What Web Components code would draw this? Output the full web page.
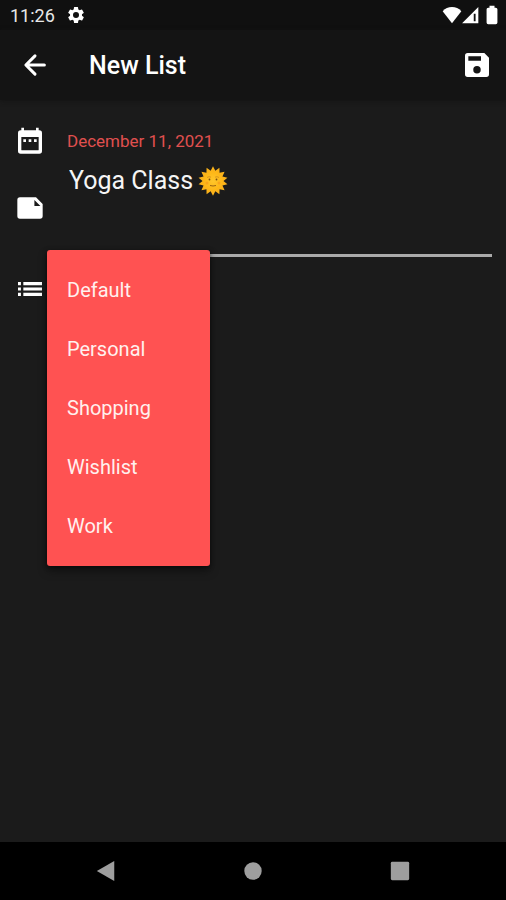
<!DOCTYPE html>
<html lang="en">
<head>
<meta charset="utf-8">
<meta name="viewport" content="width=device-width, initial-scale=1">
<title>New List</title>
<style>
body { margin: 0; background: #1b1b1b; color: #fff; font-family: Roboto, "Liberation Sans", sans-serif; }
</style>
</head>
<body>
<list-screen></list-screen>
<script>
const define = (name, css, html, setup) => {
  const template = document.createElement('template');
  template.innerHTML = `<style>
    * { box-sizing: border-box; }
    button { font: inherit; color: inherit; background: none; border: 0; padding: 0; margin: 0; cursor: pointer; }
    ${css}</style>${html}`;
  customElements.define(name, class extends HTMLElement {
    constructor() {
      super();
      this.attachShadow({ mode: 'open' }).append(template.content.cloneNode(true));
    }
    connectedCallback() { if (setup) setup(this); }
  });
};

const icons = {
  back: '<path d="M19.5 12H5M12 4.7L4.7 12l7.3 7.3" fill="none" stroke="currentColor" stroke-width="2.4" stroke-linecap="round" stroke-linejoin="round"/>',
  save: '<path fill-rule="evenodd" d="M5 3h12.5L21 6.5V19a2 2 0 0 1-2 2H5a2 2 0 0 1-2-2V5a2 2 0 0 1 2-2zm.5 2.5v3.3H15V5.500zM12 12.700a2.800 2.800 0 1 0 0 5.600 2.800 2.800 0 0 0 0-5.600z"/>',
  calendar: '<path fill-rule="evenodd" d="M5.500 2h2v2h9V2h2v2h.5a2 2 0 0 1 2 2v13.500a2 2 0 0 1-2 2H5a2 2 0 0 1-2-2V6a2 2 0 0 1 2-2h.5zM5.500 9v9.500a.5.5 0 0 0 .5.5h12a.5.5 0 0 0 .5-.5V9z"/><path d="M7 10.700h2v2H7zM11 10.700h2v2h-2zM15 10.700h2v2h-2z"/>',
  note: '<path fill-rule="evenodd" d="M4.500 4h12L21.500 9v9a2 2 0 0 1-2 2h-15a2 2 0 0 1-2-2V6a2 2 0 0 1 2-2zM15.300 6v4.500h4.500z"/>',
  list: '<path d="M3 6.800h2.200v2.400H3zM3 10.800h2.200v2.400H3zM3 14.800h2.200v2.400H3zM7 6.800h14v2.400H7zM7 10.800h14v2.400H7zM7 14.800h14v2.400H7z"/>',
  gear: '<path d="M19.140 12.940c.04-.3.06-.61.06-.94 0-.32-.02-.64-.07-.94l2.030-1.580a.49.49 0 0 0 .12-.61l-1.920-3.320a.49.49 0 0 0-.59-.22l-2.390.96a7 7 0 0 0-1.620-.94l-.36-2.540a.48.48 0 0 0-.48-.41h-3.840a.48.48 0 0 0-.47.41l-.36 2.540c-.59.24-1.130.57-1.620.94l-2.390-.96a.48.48 0 0 0-.59.22L2.740 8.870a.48.48 0 0 0 .12.61l2.030 1.580a7 7 0 0 0 0 1.880l-2.030 1.580a.49.49 0 0 0-.12.61l1.920 3.320c.12.22.37.29.59.22l2.390-.96c.5.38 1.030.7 1.620.94l.36 2.540c.05.24.24.41.48.41h3.840c.24 0 .44-.17.47-.41l.36-2.540a7 7 0 0 0 1.620-.94l2.390.96c.22.08.47 0 .59-.22l1.920-3.320a.49.49 0 0 0-.12-.61zM12 15.600a3.600 3.600 0 1 1 0-7.200 3.600 3.600 0 0 1 0 7.200z"/>',
  wifi: '<path d="M12 22L.8 7.500C3.800 4 7.600 2.500 12 2.500s8.200 1.500 11.200 5z"/>',
  signal: '<path fill-rule="evenodd" d="M2.500 22L22 2.500V22zM16.500 10.500V19.500h2.200V10.500z"/>',
  battery: '<path d="M9 1h6v2.200h1.500a2 2 0 0 1 2 2V21a2 2 0 0 1-2 2h-9a2 2 0 0 1-2-2V5.200a2 2 0 0 1 2-2H9z"/>',
  triangle: '<path d="M2 12L21 1v22z"/>',
  circle: '<circle cx="12" cy="12" r="9.500"/>',
  square: '<rect x="2" y="2" width="20" height="20" rx="1.500"/>'
};

define('md-icon',
  ':host { display: block; flex: none; width: var(--size, 32px); height: var(--size, 32px); } svg { display: block; width: 100%; height: 100%; }',
  '<svg viewBox="0 0 24 24" fill="currentColor" aria-hidden="true"></svg>',
  el => { el.shadowRoot.querySelector('svg').innerHTML = icons[el.getAttribute('name')]; });

define('sun-face',
  ':host { display: block; flex: none; width: 30px; height: 30px; } svg { display: block; width: 100%; height: 100%; }',
  `<svg viewBox="-15 -15 30 30" role="img" aria-label="Sun with face">
    <defs><radialGradient id="glow"><stop offset="0" stop-color="#ffc62a"/><stop offset="1" stop-color="#fdb515"/></radialGradient></defs>
    <path id="rays" fill="#fbb31a"/>
    <circle r="10" fill="url(#glow)"/>
    <path d="M-6-3.500q2-1.500 4-.3M2-3.800q2-1.200 4 .3" stroke="#d9961c" fill="none"/>
    <circle cx="-3.500" cy="-1.500" r=".9" fill="#7b5012"/><circle cx="3.500" cy="-1.500" r=".9" fill="#7b5012"/>
    <path d="M-3 4.500q3 1 6 0" stroke="#9a6414" fill="none"/>
    <circle cx="-6" cy="2" r="1.500" fill="#f9a41c"/><circle cx="6" cy="2" r="1.500" fill="#f9a41c"/>
  </svg>`,
  el => {
    const points = Array.from({ length: 28 }, (_, i) => {
      const r = i % 2 ? 10.5 : 14.8, a = i * Math.PI / 14 - Math.PI / 2;
      return (r * Math.cos(a)).toFixed(2) + ' ' + (r * Math.sin(a)).toFixed(2);
    });
    el.shadowRoot.querySelector('#rays').setAttribute('d', 'M' + points.join('L') + 'Z');
  });

define('status-bar',
  `:host { display: flex; align-items: center; height: 30px; padding: 0 4px 0 10px; background: #101010; font-size: 18px; line-height: 30px; --size: 20px; }
   time { margin-right: 11px; padding-top: 2px; color: #e8e8e8; }
   .signals { display: flex; margin-left: auto; align-items: center; }
   md-icon[name=signal] { margin-left: -2px; }
   md-icon[name=battery] { margin-left: 2px; }`,
  `<time>11:26</time><md-icon name="gear"></md-icon>
   <div class="signals"><md-icon name="wifi"></md-icon><md-icon name="signal"></md-icon><md-icon name="battery"></md-icon></div>`);

define('app-bar',
  `:host { display: flex; align-items: center; height: 70px; padding: 0 13px 0 20px; background: #141414; box-shadow: 0 1px 4px #141414; }
   h1 { flex: 1; margin: 0 0 0 39px; padding-top: 2px; font-size: 25px; line-height: 30px; font-weight: 500; }
   .back { --size: 30px; }`,
  `<button class="back" aria-label="Back"><md-icon name="back"></md-icon></button>
   <h1><slot></slot></h1>
   <button aria-label="Save"><md-icon name="save"></md-icon></button>`);

define('form-row',
  `:host { display: flex; position: relative; align-items: center; gap: 21px; padding: 0 14px; }
   .field { flex: 1; min-width: 0; }`,
  '<slot name="icon"></slot><div class="field"><slot></slot></div>');

define('date-field',
  ':host { display: block; } button { display: block; font-size: 17px; line-height: 32px; color: #e0504f; }',
  '<button aria-label="Date: December 11, 2021">December 11, 2021</button>');

define('title-field',
  `:host { display: block; height: 98px; border-bottom: 3px solid #aaa; }
   label { display: flex; align-items: center; height: 44px; padding-left: 2px; gap: 5px; }
   input { field-sizing: content; font: inherit; font-size: 25px; line-height: 32px; color: #f5f5f5; background: none; border: 0; padding: 0; outline: 0; min-width: 0; }`,
  '<label><input type="text" value="Yoga Class" aria-label="List title"><sun-face></sun-face></label>');

define('category-menu',
  `:host { display: block; position: absolute; z-index: 1; left: 47px; top: -23px; min-width: 163px; padding: 11px 0 10px; border-radius: 3px; background: #ff5252; box-shadow: 0 5px 10px rgba(0,0,0,.4), 0 1px 4px rgba(0,0,0,.5); }
   button { display: block; width: 100%; padding: 0 20px; text-align: left; font-size: 20px; line-height: 59px; color: #fff0ee; }`,
  `<div role="menu" aria-label="Category">${['Default', 'Personal', 'Shopping', 'Wishlist', 'Work'].map(t => `<button role="menuitem">${t}</button>`).join('')}</div>`);

define('nav-bar',
  `:host { display: grid; grid-template-columns: repeat(3, 1fr); place-items: center; height: 58px; padding: 0 33px; background: #000; color: #9e9e9e; --size: 22px; }
   button { padding: 10px; }`,
  `<button aria-label="Back"><md-icon name="triangle"></md-icon></button>
   <button aria-label="Home"><md-icon name="circle"></md-icon></button>
   <button aria-label="Recent apps"><md-icon name="square"></md-icon></button>`);

define('list-screen',
  `:host { display: flex; flex-direction: column; min-height: 100vh; }
   main { flex: 1; padding-top: 25px; }
   .title { margin: 2px 0 16px; }
   .category { min-height: 32px; }`,
  `<status-bar></status-bar>
   <app-bar>New List</app-bar>
   <main>
     <form-row><md-icon slot="icon" name="calendar"></md-icon><date-field></date-field></form-row>
     <form-row class="title"><md-icon slot="icon" name="note"></md-icon><title-field></title-field></form-row>
     <form-row class="category"><md-icon slot="icon" name="list"></md-icon><category-menu></category-menu></form-row>
   </main>
   <nav-bar></nav-bar>`);
</script>
</body>
</html>
